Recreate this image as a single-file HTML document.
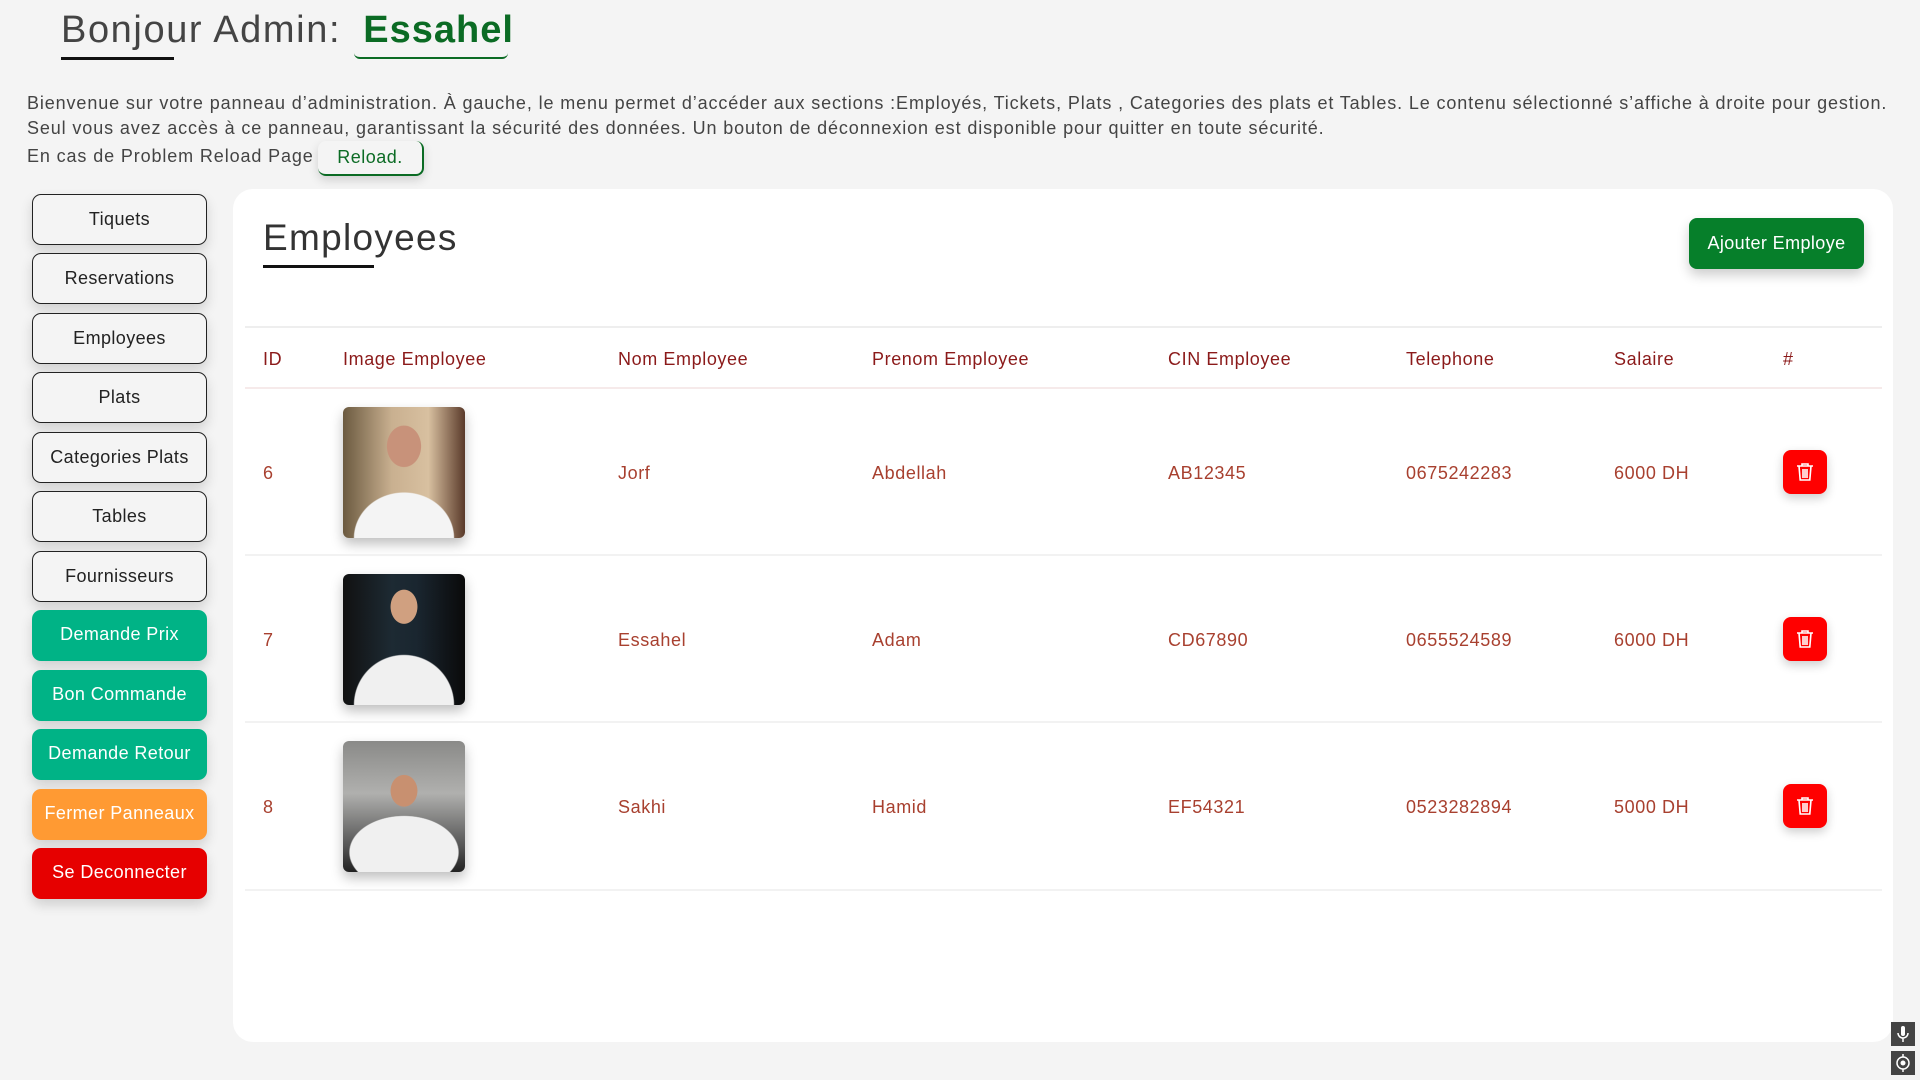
<!DOCTYPE html>
<html><head><meta charset="utf-8"><style>
*{box-sizing:border-box;margin:0;padding:0}
body{width:1920px;height:1080px;background:#f4f4f4;font-family:"Liberation Sans",sans-serif;position:relative;overflow:hidden;color:#444}
.a{position:absolute}
.t1{left:61px;top:9px;font-size:38px;color:#444;letter-spacing:1.6px}
.t1 b{color:#0b6b24;margin-left:10px;letter-spacing:1px}
.ul1{left:61px;top:57px;width:113px;height:3px;background:#111}
.ul2{left:354px;top:46px;width:154px;height:13px;border-bottom:2px solid #0b6b24;border-radius:0 0 6px 6px}
.p{left:27px;font-size:18px;color:#444;letter-spacing:.88px;white-space:nowrap}
.rel{left:318px;top:141px;width:106px;height:35px;border-radius:8px;border-bottom:2px solid #0b6b24;border-right:2px solid #0b6b24;box-shadow:0 4px 10px rgba(0,0,0,.15);color:#0b6b24;font-size:18px;text-align:center;line-height:33px;letter-spacing:.5px}
.sb{left:32px;width:175px;height:51px;border-radius:9px;font-size:18px;text-align:center;line-height:49px;box-shadow:0 6px 12px rgba(0,0,0,.15);letter-spacing:.4px;white-space:nowrap}
.w{border:1.5px solid #222;color:#222;background:#f4f4f4}
.g{background:#00b386;color:#fff}
.o{background:#ff9a33;color:#fff}
.r{background:#e60000;color:#fff}
.card{left:233px;top:189px;width:1660px;height:853px;background:#fff;border-radius:20px}
.h2{left:263px;top:217px;font-size:37px;color:#333;letter-spacing:1.3px}
.ul3{left:263px;top:265px;width:111px;height:3px;background:#111}
.add{left:1689px;top:218px;width:175px;height:51px;background:#067f2a;color:#fff;border-radius:8px;font-size:18px;text-align:center;line-height:51px;box-shadow:0 6px 12px rgba(0,0,0,.2);letter-spacing:.4px}
.ln{left:245px;width:1637px;height:2px;background:#eee}
.th{font-size:18px;color:#8b1a1a;top:349px;letter-spacing:.6px}
.td{font-size:18px;color:#a8402f;letter-spacing:.6px}
.img{left:343px;width:122px;height:131px;border-radius:6px;box-shadow:0 6px 12px rgba(0,0,0,.25)}
.del{left:1783px;width:44px;height:44px;background:#f00;border-radius:8px;box-shadow:0 4px 10px rgba(0,0,0,.2)}
.del svg{position:absolute;left:13px;top:12px}
.ic{left:1891px;width:24px;height:24px;background:#444}
</style></head><body>
<div class="a t1">Bonjour Admin: <b>Essahel</b></div>
<div class="a ul1"></div><div class="a ul2"></div>
<div class="a p" style="top:93px">Bienvenue sur votre panneau d’administration. À gauche, le menu permet d’accéder aux sections :Employés, Tickets, Plats , Categories des plats et Tables. Le contenu sélectionné s’affiche à droite pour gestion.</div>
<div class="a p" style="top:118px">Seul vous avez accès à ce panneau, garantissant la sécurité des données. Un bouton de déconnexion est disponible pour quitter en toute sécurité.</div>
<div class="a p" style="top:146px">En cas de Problem Reload Page</div>
<div class="a rel">Reload.</div>

<div class="a sb w" style="top:194px">Tiquets</div>
<div class="a sb w" style="top:253px">Reservations</div>
<div class="a sb w" style="top:313px">Employees</div>
<div class="a sb w" style="top:372px">Plats</div>
<div class="a sb w" style="top:432px">Categories Plats</div>
<div class="a sb w" style="top:491px">Tables</div>
<div class="a sb w" style="top:551px">Fournisseurs</div>
<div class="a sb g" style="top:610px">Demande Prix</div>
<div class="a sb g" style="top:670px">Bon Commande</div>
<div class="a sb g" style="top:729px">Demande Retour</div>
<div class="a sb o" style="top:789px">Fermer Panneaux</div>
<div class="a sb r" style="top:848px">Se Deconnecter</div>

<div class="a card"></div>
<div class="a h2">Employees</div><div class="a ul3"></div>
<div class="a add">Ajouter Employe</div>
<div class="a ln" style="top:326px"></div>
<div class="a th" style="left:263px">ID</div>
<div class="a th" style="left:343px">Image Employee</div>
<div class="a th" style="left:618px">Nom Employee</div>
<div class="a th" style="left:872px">Prenom Employee</div>
<div class="a th" style="left:1168px">CIN Employee</div>
<div class="a th" style="left:1406px">Telephone</div>
<div class="a th" style="left:1614px">Salaire</div>
<div class="a th" style="left:1783px">#</div>
<div class="a ln" style="top:387px;background:#f6eaea"></div>

<div class="a img" style="top:407px;background:radial-gradient(ellipse 28px 34px at 50% 30%,#c8927a 60%,transparent 62%),radial-gradient(ellipse 55px 50px at 50% 100%,#f4f4f4 90%,transparent 92%),linear-gradient(90deg,#6b5a40,#c9b090 40%,#d8c0a0 70%,#5a3a2a)"></div>
<div class="a img" style="top:574px;background:radial-gradient(ellipse 22px 28px at 50% 25%,#d0a080 60%,transparent 62%),radial-gradient(ellipse 55px 55px at 50% 100%,#f0f0f0 90%,transparent 92%),linear-gradient(90deg,#111,#1d2a33 40%,#1a2630 60%,#0a0a0a)"></div>
<div class="a img" style="top:741px;background:radial-gradient(ellipse 22px 26px at 50% 38%,#c89070 60%,transparent 62%),radial-gradient(ellipse 60px 40px at 50% 85%,#f0f0f0 90%,transparent 92%),linear-gradient(180deg,#8a8a88,#b0b0ae 40%,#555 80%,#222)"></div>

<div class="a td" style="left:263px;top:463px">6</div>
<div class="a td" style="left:618px;top:463px">Jorf</div>
<div class="a td" style="left:872px;top:463px">Abdellah</div>
<div class="a td" style="left:1168px;top:463px">AB12345</div>
<div class="a td" style="left:1406px;top:463px">0675242283</div>
<div class="a td" style="left:1614px;top:463px">6000 DH</div>
<div class="a ln" style="top:554px;background:#f2f2f2"></div>
<div class="a td" style="left:263px;top:630px">7</div>
<div class="a td" style="left:618px;top:630px">Essahel</div>
<div class="a td" style="left:872px;top:630px">Adam</div>
<div class="a td" style="left:1168px;top:630px">CD67890</div>
<div class="a td" style="left:1406px;top:630px">0655524589</div>
<div class="a td" style="left:1614px;top:630px">6000 DH</div>
<div class="a ln" style="top:721px;background:#f2f2f2"></div>
<div class="a td" style="left:263px;top:797px">8</div>
<div class="a td" style="left:618px;top:797px">Sakhi</div>
<div class="a td" style="left:872px;top:797px">Hamid</div>
<div class="a td" style="left:1168px;top:797px">EF54321</div>
<div class="a td" style="left:1406px;top:797px">0523282894</div>
<div class="a td" style="left:1614px;top:797px">5000 DH</div>
<div class="a ln" style="top:889px;background:#f2f2f2"></div>

<div class="a del" style="top:450px"><svg width="18" height="20" viewBox="0 0 18 20" fill="none" stroke="#fff" stroke-width="1.6"><path d="M1 4h16M6 4V2h6v2M3 4l1.2 14h9.6L15 4M7 7v9M9 7v9M11 7v9"/></svg></div>
<div class="a del" style="top:617px"><svg width="18" height="20" viewBox="0 0 18 20" fill="none" stroke="#fff" stroke-width="1.6"><path d="M1 4h16M6 4V2h6v2M3 4l1.2 14h9.6L15 4M7 7v9M9 7v9M11 7v9"/></svg></div>
<div class="a del" style="top:784px"><svg width="18" height="20" viewBox="0 0 18 20" fill="none" stroke="#fff" stroke-width="1.6"><path d="M1 4h16M6 4V2h6v2M3 4l1.2 14h9.6L15 4M7 7v9M9 7v9M11 7v9"/></svg></div>

<div class="a ic" style="top:1022px"><svg width="24" height="24" viewBox="0 0 24 24"><rect x="10" y="4" width="4" height="10" rx="2" fill="#fff"/><path d="M7 11a5 5 0 0 0 10 0M12 16v4" stroke="#fff" stroke-width="1.5" fill="none"/></svg></div>
<div class="a ic" style="top:1051px"><svg width="24" height="24" viewBox="0 0 24 24"><circle cx="12" cy="12" r="6" stroke="#fff" stroke-width="1.5" fill="none"/><circle cx="12" cy="12" r="2.5" fill="#fff"/><path d="M12 3v3M12 18v3" stroke="#fff" stroke-width="1.5"/></svg></div>
</body></html>
